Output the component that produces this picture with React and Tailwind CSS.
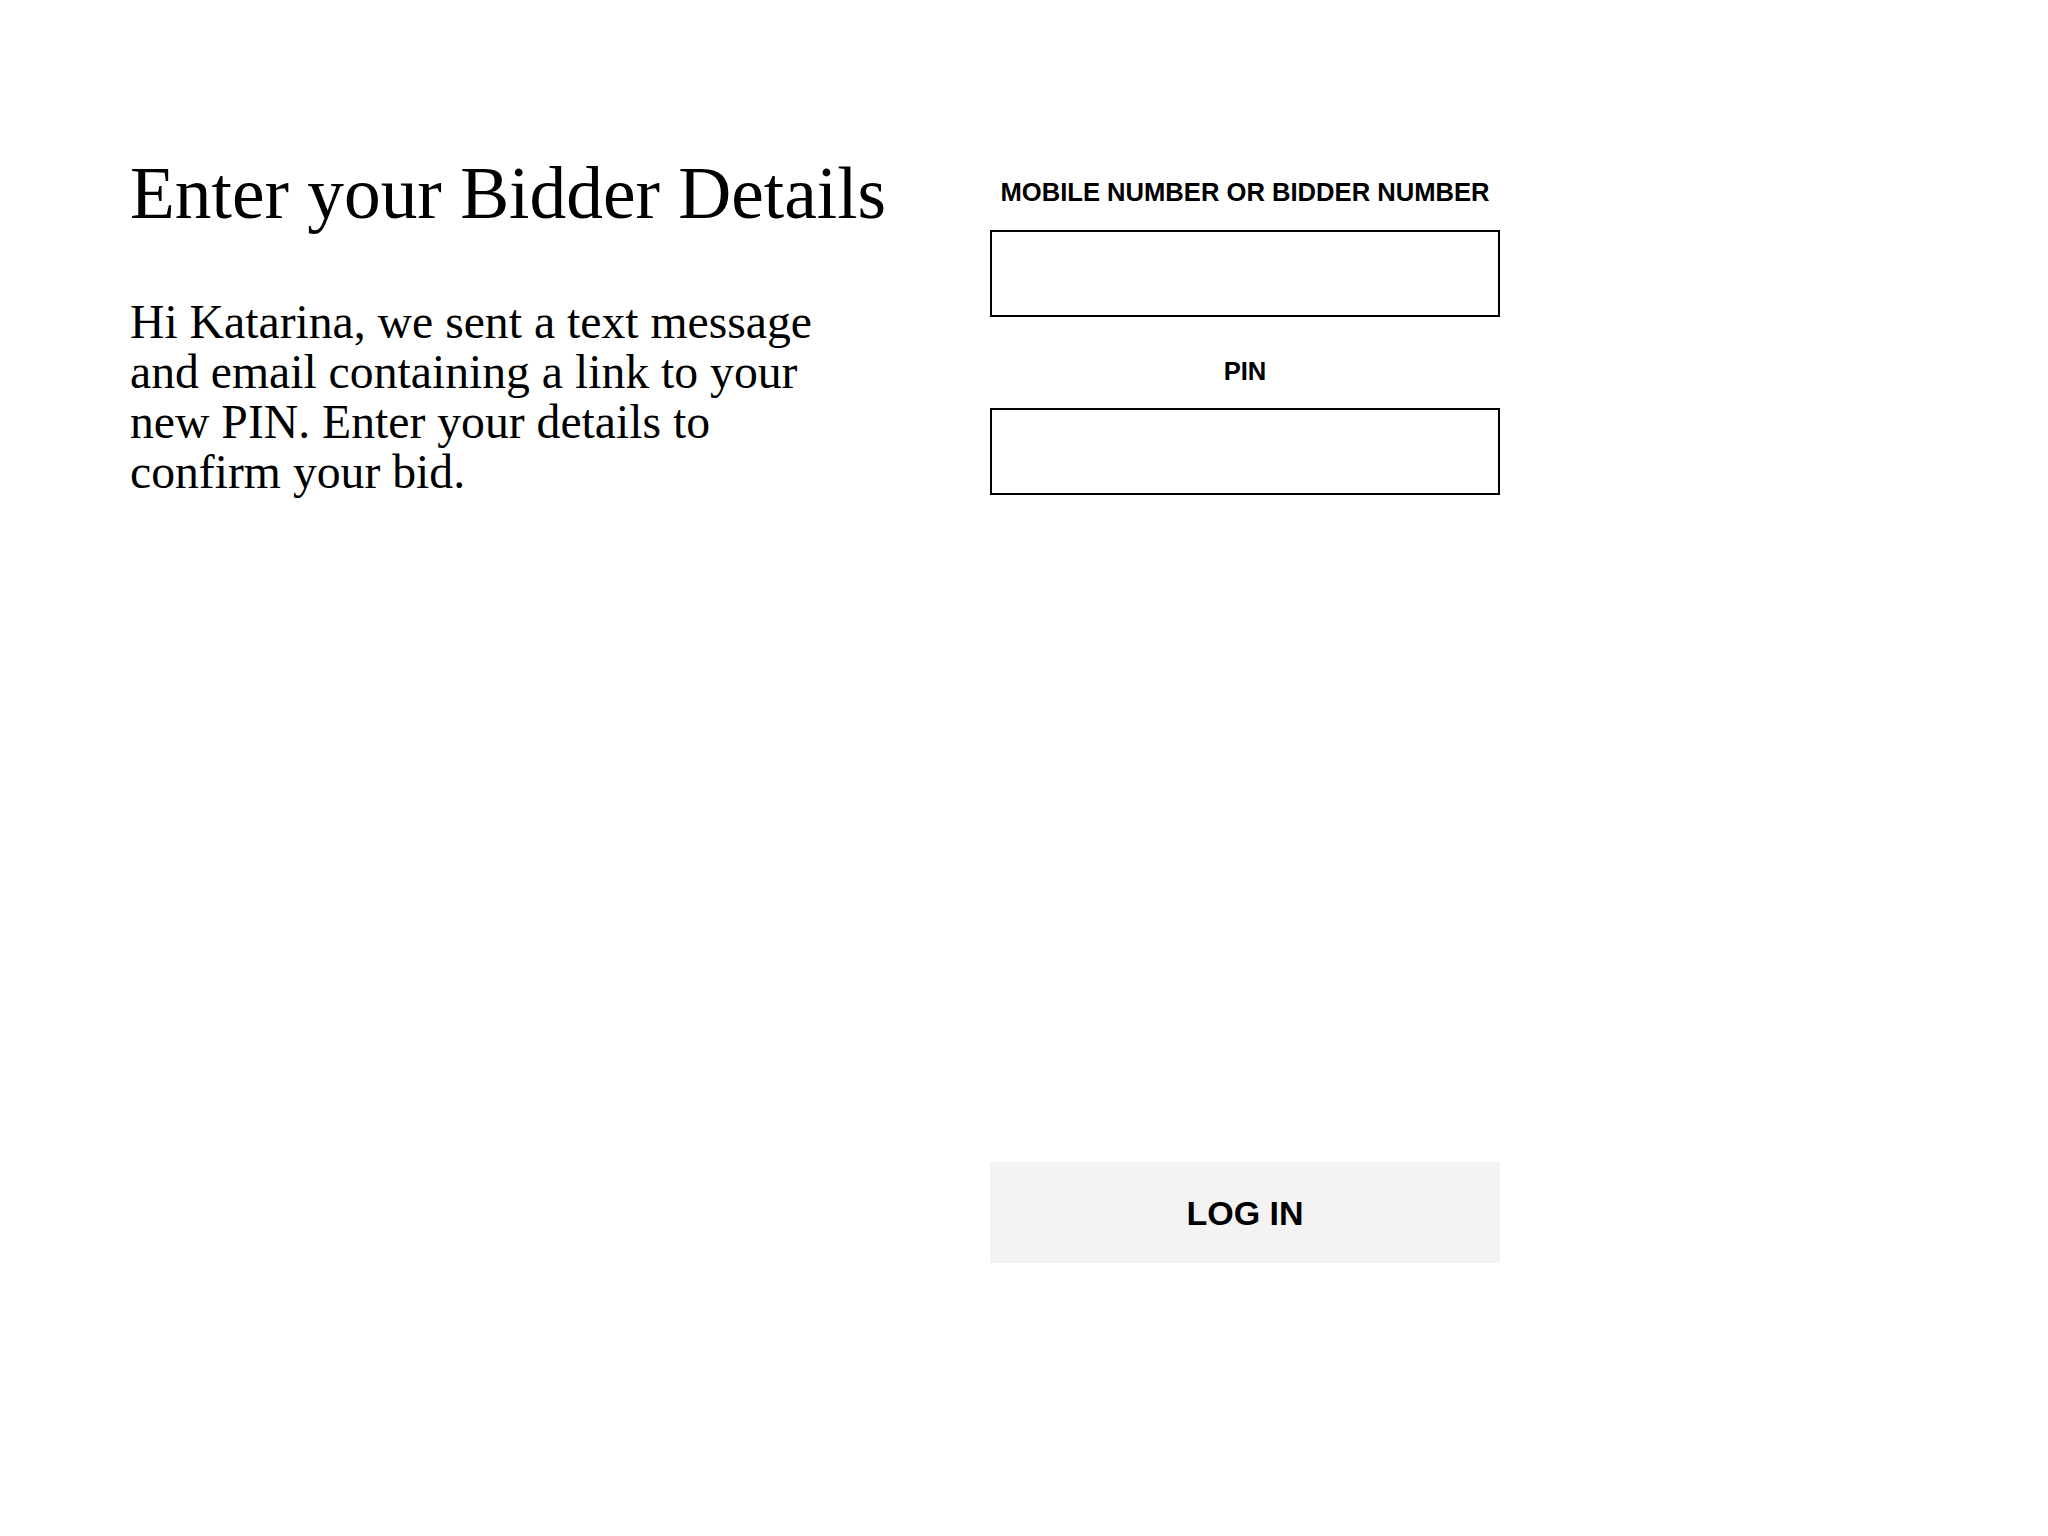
export default function App() {
  return (
    <div className="min-h-screen bg-white text-black">
      <div className="flex pl-[130px] pt-[158px]">
        <div className="w-[860px] shrink-0 font-['Liberation_Serif',serif]">
          <h1 className="text-[73.4px] leading-[72px] font-normal">Enter your Bidder Details</h1>
          <p className="mt-[67px] w-[700px] text-[47.7px] leading-[50px]">
            Hi Katarina, we sent a text message and email containing a link to your new PIN. Enter your details to confirm your bid.
          </p>
        </div>
        <div className="w-[510px] shrink-0 pt-[19px] flex flex-col font-['Liberation_Sans',Arial,sans-serif]">
          <label className="block text-center text-[25.6px] leading-[30px] font-bold">MOBILE NUMBER OR BIDDER NUMBER</label>
          <input type="text" className="mt-[23px] h-[87px] w-full border-2 border-black bg-white outline-none" />
          <label className="mt-[39px] block text-center text-[25.6px] leading-[30px] font-bold">PIN</label>
          <input type="password" className="mt-[22px] h-[87px] w-full border-2 border-black bg-white outline-none" />
          <button className="mt-[667px] h-[101px] w-full bg-[#f3f3f3] text-[34px] font-bold leading-none">LOG IN</button>
        </div>
      </div>
    </div>
  );
}
